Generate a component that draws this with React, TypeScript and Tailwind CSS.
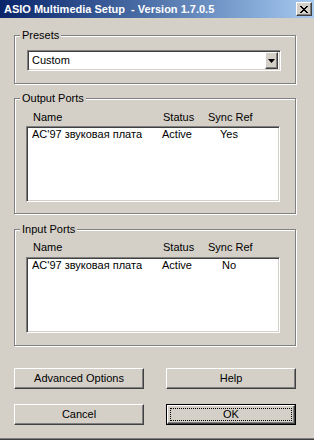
import React from 'react';

const font = { fontFamily: '"Liberation Sans", Arial, sans-serif' };

const raised =
  'border border-t-white border-l-white border-r-[#404040] border-b-[#404040] shadow-[inset_-1px_-1px_0_#808080]';
const sunken =
  'border border-t-[#808080] border-l-[#808080] border-r-white border-b-white shadow-[inset_1px_1px_0_#404040,inset_-1px_-1px_0_#d4d0c8]';

type Port = { name: string; status: string; sync: string };

function GroupBox({ title, className, children }: { title: string; className?: string; children: React.ReactNode }) {
  return (
    <fieldset
      className={`mx-[14px] w-[282px] shrink-0 border border-[#808080] shadow-[1px_1px_0_white,inset_1px_1px_0_white] ${className ?? ''}`}
    >
      <legend className="ml-[5px] px-[2px] bg-[#d4d0c8] text-[11px] leading-[13px] text-black">{title}</legend>
      {children}
    </fieldset>
  );
}

function PortList({ title, ports, className, headerPad }: { title: string; ports: Port[]; className?: string; headerPad: string }) {
  return (
    <GroupBox title={title} className={className}>
      <div className={`grid grid-cols-[130px_45px_50px] pl-[18px] text-[11px] leading-[13px] whitespace-nowrap ${headerPad}`}>
        <span>Name</span>
        <span>Status</span>
        <span>Sync Ref</span>
      </div>
      <div className={`ml-[11px] w-[254px] h-[76px] bg-white ${sunken}`}>
        {ports.map((p) => (
          <div key={p.name} className="grid grid-cols-[130px_45px_44px] pl-[5px] pt-[1px] text-[11px] leading-[13px] whitespace-nowrap">
            <span>{p.name}</span>
            <span>{p.status}</span>
            <span className="text-center">{p.sync}</span>
          </div>
        ))}
      </div>
    </GroupBox>
  );
}

function Button({ label, isDefault }: { label: string; isDefault?: boolean }) {
  if (isDefault) {
    return (
      <button className="w-[130px] h-[21px] border border-black bg-[#d4d0c8] flex">
        <span className={`flex-1 flex p-[2px] ${raised}`}>
          <span className="flex-1 flex items-center justify-center border border-dotted border-black text-[11px] leading-[13px]">
            {label}
          </span>
        </span>
      </button>
    );
  }
  return (
    <button className={`w-[130px] h-[21px] bg-[#d4d0c8] flex items-center justify-center text-[11px] leading-[13px] ${raised}`}>
      {label}
    </button>
  );
}

export default function App() {
  const outputs: Port[] = [{ name: 'AC\'97 звуковая плата', status: 'Active', sync: 'Yes' }];
  const inputs: Port[] = [{ name: 'AC\'97 звуковая плата', status: 'Active', sync: 'No' }];

  return (
    <div
      className="w-[314px] h-[440px] bg-[#d4d0c8] text-black flex flex-col overflow-hidden shadow-[inset_0_-1px_0_#404040,inset_0_-2px_0_#808080]"
      style={font}
    >
      {/* Title bar */}
      <div className="h-[18px] shrink-0 flex items-center justify-between pl-[4px] pr-[2px] bg-gradient-to-r from-[#0a246a] to-[#a6caf0]">
        <span className="text-white font-bold text-[11px] leading-[13px] whitespace-pre">
          ASIO Multimedia Setup  - Version 1.7.0.5
        </span>
        <button className={`w-[16px] h-[14px] bg-[#d4d0c8] flex items-center justify-center ${raised}`}>
          <svg width="8" height="7" viewBox="0 0 8 7" shapeRendering="crispEdges">
            <path d="M0 0h2v1h1v1h2V1h1V0h2v1H7v1H6v1H5v1h1v1h1v1h1v1H6V6H5V5H3v1H2v1H0V6h1V5h1V4h1V3H2V2H1V1H0z" fill="black" />
          </svg>
        </button>
      </div>

      {/* Presets */}
      <GroupBox title="Presets" className="mt-[11px] pt-[8px] pb-[12px]">
        <div className={`ml-[12px] w-[254px] h-[21px] bg-white flex items-center p-[2px] ${sunken}`}>
          <span className="flex-1 pl-[2px] text-[11px] leading-[13px]">Custom</span>
          <span className={`w-[13px] h-[17px] bg-[#d4d0c8] flex items-center justify-center ${raised}`}>
            <svg width="7" height="4" viewBox="0 0 7 4">
              <path d="M0 0h7L3.5 4z" fill="black" />
            </svg>
          </span>
        </div>
      </GroupBox>

      <PortList title="Output Ports" ports={outputs} className="mt-[8px] pb-[11px]" headerPad="pt-[6px] pb-[2px]" />
      <PortList title="Input Ports" ports={inputs} className="mt-[9px] pb-[12px]" headerPad="pt-[5px] pb-[3px]" />

      {/* Buttons */}
      <div className="mt-[22px] mx-[14px] grid grid-cols-[130px_130px] gap-x-[22px] gap-y-[15px]">
        <Button label="Advanced Options" />
        <Button label="Help" />
        <Button label="Cancel" />
        <Button label="OK" isDefault />
      </div>
    </div>
  );
}
